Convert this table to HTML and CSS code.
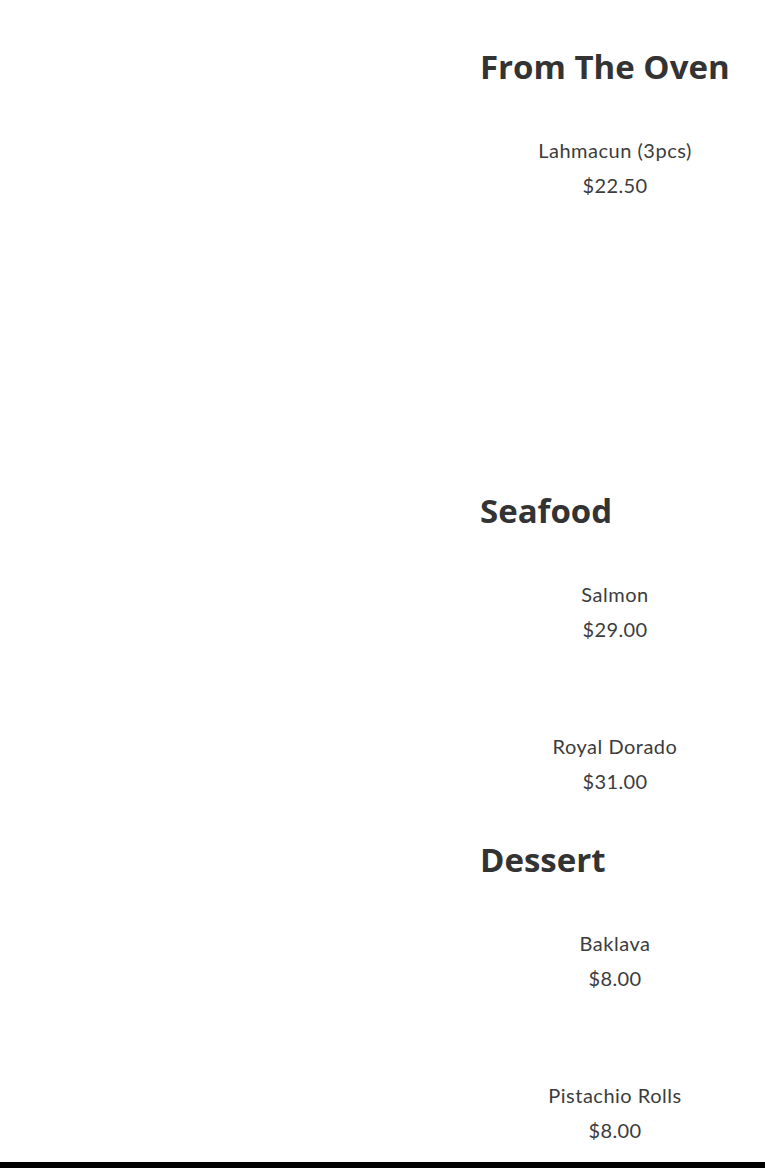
FILE: index.html
```html
<!DOCTYPE html>
<html lang="en">
<head>
<meta charset="utf-8">
<title>Menu</title>
<link rel="stylesheet" href="styles.css">
</head>
<body>
<main class="page">
  <div class="spacer"></div>
  <div class="menu">
    <section class="section section-tall">
      <h2 class="section-title">From The Oven</h2>
      <ul class="items">
        <li class="item"><span class="item-name">Lahmacun (3pcs)</span><span class="item-price">$22.50</span></li>
      </ul>
    </section>
    <section class="section">
      <h2 class="section-title">Seafood</h2>
      <ul class="items">
        <li class="item"><span class="item-name">Salmon</span><span class="item-price">$29.00</span></li>
        <li class="item"><span class="item-name">Royal Dorado</span><span class="item-price">$31.00</span></li>
      </ul>
    </section>
    <section class="section">
      <h2 class="section-title">Dessert</h2>
      <ul class="items">
        <li class="item"><span class="item-name">Baklava</span><span class="item-price">$8.00</span></li>
        <li class="item"><span class="item-name">Pistachio Rolls</span><span class="item-price">$8.00</span></li>
      </ul>
    </section>
  </div>
</main>
<footer class="footer"></footer>
</body>
</html>
```
FILE: styles.css
```css
html, body {
  margin: 0;
  padding: 0;
  background: #fff;
}
body {
  font-family: "Lato", "Open Sans", sans-serif;
  color: #333;
}
.page {
  display: grid;
  grid-template-columns: 480px 270px;
  padding-top: 47px;
  padding-bottom: 14px;
}
.menu {
  display: flex;
  flex-direction: column;
  gap: 41.5px;
}
.section-tall {
  padding-bottom: 246px;
}
.section-title {
  margin: 0;
  font-family: "Open Sans", "Lato", sans-serif;
  font-size: 33px;
  line-height: 40px;
  font-weight: 700;
  color: #333;
  white-space: nowrap;
}
.items {
  list-style: none;
  margin: 46px 0 0;
  padding: 0;
  display: flex;
  flex-direction: column;
  gap: 82px;
}
.item {
  display: flex;
  flex-direction: column;
  align-items: center;
  text-align: center;
}
.item-name {
  font-size: 20px;
  line-height: 35px;
  font-weight: 400;
  letter-spacing: 0.5px;
  color: #3c3c3c;
}
.item-price {
  font-size: 20px;
  line-height: 35px;
  font-weight: 400;
  letter-spacing: 0.4px;
  color: #3c3c3c;
}
.footer {
  height: 7px;
  background: #000;
}
```
